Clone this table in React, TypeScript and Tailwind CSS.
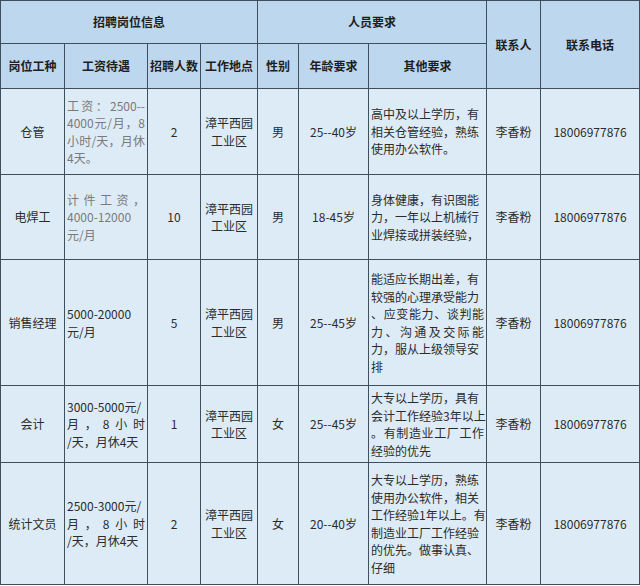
import React from "react";

const B = "border border-[#3e4f5e]";
const J = "text-justify [text-align-last:justify]";

type Row = {
  job: string;
  salary: { t: string; j?: boolean }[];
  gray?: boolean;
  num: string;
  sex: string;
  age: string;
  other: { t: string; j?: boolean }[];
  h: string;
};

const rows: Row[] = [
  {
    job: "仓管",
    salary: [
      { t: "工资：2500--", j: true },
      { t: "4000元/月，8", j: true },
      { t: "小时/天，月休", j: true },
      { t: "4天。" },
    ],
    gray: true,
    num: "2",
    sex: "男",
    age: "25--40岁",
    other: [
      { t: "高中及以上学历，有" },
      { t: "相关仓管经验，熟练" },
      { t: "使用办公软件。" },
    ],
    h: "h-[86px]",
  },
  {
    job: "电焊工",
    salary: [
      { t: "计件工资，", j: true },
      { t: "4000-12000" },
      { t: "元/月" },
    ],
    gray: true,
    num: "10",
    sex: "男",
    age: "18-45岁",
    other: [
      { t: "身体健康，有识图能" },
      { t: "力，一年以上机械行" },
      { t: "业焊接或拼装经验，" },
    ],
    h: "h-[85px]",
  },
  {
    job: "销售经理",
    salary: [{ t: "5000-20000" }, { t: "元/月" }],
    num: "5",
    sex: "男",
    age: "25--45岁",
    other: [
      { t: "能适应长期出差，有" },
      { t: "较强的心理承受能力" },
      { t: "、应变能力、谈判能", j: true },
      { t: "力、沟通及交际能", j: true },
      { t: "力，服从上级领导安" },
      { t: "排" },
    ],
    h: "h-[126px]",
  },
  {
    job: "会计",
    salary: [
      { t: "3000-5000元/" },
      { t: "月，8小时", j: true },
      { t: "/天，月休4天" },
    ],
    num: "1",
    sex: "女",
    age: "25--45岁",
    other: [
      { t: "大专以上学历，具有" },
      { t: "会计工作经验3年以上" },
      { t: "。有制造业工厂工作", j: true },
      { t: "经验的优先" },
    ],
    h: "h-[77px]",
  },
  {
    job: "统计文员",
    salary: [
      { t: "2500-3000元/" },
      { t: "月，8小时", j: true },
      { t: "/天，月休4天" },
    ],
    num: "2",
    sex: "女",
    age: "20--40岁",
    other: [
      { t: "大专以上学历，熟练" },
      { t: "使用办公软件，相关" },
      { t: "工作经验1年以上。有" },
      { t: "制造业工厂工作经验" },
      { t: "的优先。做事认真、" },
      { t: "仔细" },
    ],
    h: "h-[122px]",
  },
];

export default function App() {
  return (
    <div className="w-[640px] h-[586px] bg-white overflow-hidden">
      <table
        className="border-collapse table-fixed w-[639px] text-[12px] leading-[17.5px] text-[#2b2b2b]"
        style={{ fontFamily: '"Noto Sans CJK SC", "Noto Sans", sans-serif' }}
      >
        <colgroup>
          <col className="w-[64px]" />
          <col className="w-[83px]" />
          <col className="w-[53px]" />
          <col className="w-[57px]" />
          <col className="w-[41px]" />
          <col className="w-[70px]" />
          <col className="w-[118px]" />
          <col className="w-[54px]" />
          <col className="w-[99px]" />
        </colgroup>
        <thead className="bg-[#bdd7ee] font-bold text-[#1e1e1e]">
          <tr className="h-[43px]">
            <th colSpan={4} className={`${B} font-bold`}>招聘岗位信息</th>
            <th colSpan={3} className={`${B} font-bold`}>人员要求</th>
            <th rowSpan={2} className={`${B} font-bold`}>联系人</th>
            <th rowSpan={2} className={`${B} font-bold`}>联系电话</th>
          </tr>
          <tr className="h-[45px]">
            <th className={`${B} font-bold`}>岗位工种</th>
            <th className={`${B} font-bold`}>工资待遇</th>
            <th className={`${B} font-bold`}>招聘人数</th>
            <th className={`${B} font-bold`}>工作地点</th>
            <th className={`${B} font-bold`}>性别</th>
            <th className={`${B} font-bold`}>年龄要求</th>
            <th className={`${B} font-bold`}>其他要求</th>
          </tr>
        </thead>
        <tbody className="bg-[#ddebf7]">
          {rows.map((r, i) => (
            <tr key={i} className={r.h}>
              <td className={`${B} text-center align-middle`}>{r.job}</td>
              <td
                className={`${B} align-middle px-[2px] ${
                  r.gray ? "text-[#7a7a7a]" : "text-[#2b2b2b]"
                }`}
              >
                {r.salary.map((l, k) => (
                  <div key={k} className={l.j ? J : "text-left"}>
                    {l.t}
                  </div>
                ))}
              </td>
              <td className={`${B} text-center align-middle`}>{r.num}</td>
              <td className={`${B} text-center align-middle`}>
                <div>漳平西园</div>
                <div>工业区</div>
              </td>
              <td className={`${B} text-center align-middle`}>{r.sex}</td>
              <td className={`${B} text-center align-middle`}>{r.age}</td>
              <td className={`${B} align-middle px-[2px]`}>
                {r.other.map((l, k) => (
                  <div key={k} className={l.j ? J : "text-left whitespace-nowrap"}>
                    {l.t}
                  </div>
                ))}
              </td>
              <td className={`${B} text-center align-middle`}>李香粉</td>
              <td className={`${B} text-center align-middle`}>18006977876</td>
            </tr>
          ))}
        </tbody>
      </table>
    </div>
  );
}
